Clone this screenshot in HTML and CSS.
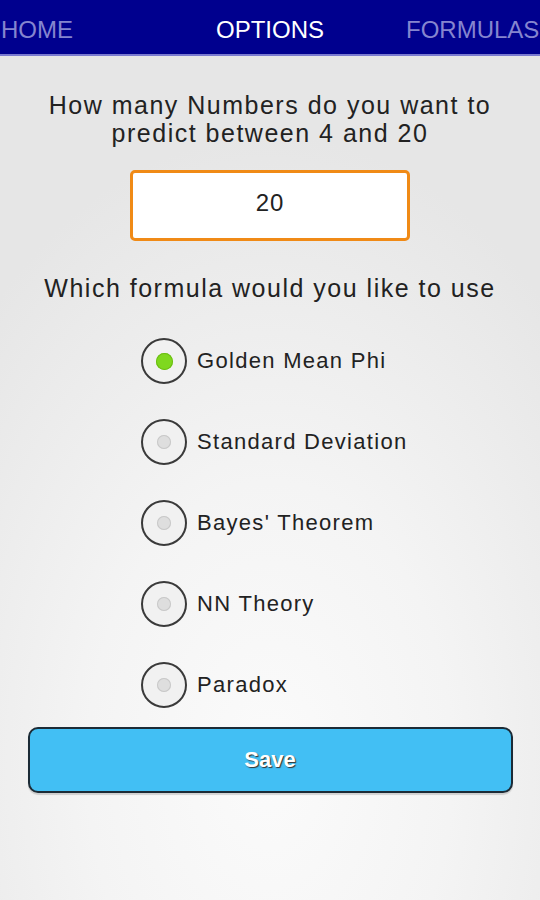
FILE: index.html
```html
<!DOCTYPE html>
<html lang="en">
<head>
  <meta charset="UTF-8" />
  <meta name="viewport" content="width=device-width, initial-scale=1.0"/>
  <title>Options</title>
  <link rel="stylesheet" href="styles.css">
</head>
<body>
  <nav class="tabs">
    <span class="tab">HOME</span>
    <span class="tab active">OPTIONS</span>
    <span class="tab">FORMULAS</span>
  </nav>

  <main class="options">
    <p class="question">How many Numbers do you want to<br>predict between 4 and 20</p>
    <input class="count" type="text" value="20">

    <p class="question formula-q">Which formula would you like to use</p>

    <ul class="formulas">
      <li class="formula checked"><span class="radio"><span class="dot"></span></span>Golden Mean Phi</li>
      <li class="formula"><span class="radio"><span class="dot"></span></span>Standard Deviation</li>
      <li class="formula"><span class="radio"><span class="dot"></span></span>Bayes' Theorem</li>
      <li class="formula"><span class="radio"><span class="dot"></span></span>NN Theory</li>
      <li class="formula"><span class="radio"><span class="dot"></span></span>Paradox</li>
    </ul>

    <button class="save">Save</button>
  </main>
</body>
</html>
```

FILE: styles.css
```css
html {
  height: 100%;
}
body {
  margin: 0;
  min-height: 100%;
  font-family: "Liberation Sans", Arial, sans-serif;
  color: #222;
  background: radial-gradient(ellipse 75% 70% at 50% 85%, #fbfbfb 0%, #f4f4f4 45%, #e6e6e6 100%);
  background-color: #e8e8e8;
  overflow: hidden;
}
.tabs {
  height: 56px;
  box-sizing: border-box;
  padding-top: 5px;
  background: #00008e;
  border-bottom: 2px solid #7a7ad0;
  display: flex;
  align-items: center;
  white-space: nowrap;
  overflow: hidden;
  font-size: 24px;
}
.tab {
  color: #8585cf;
  flex: none;
}
.tab:first-child {
  width: 215px;
  margin-left: 1px;
}
.tab.active {
  color: #fff;
  width: 190px;
}
.options {
  display: flex;
  flex-direction: column;
  align-items: center;
  padding-top: 35px;
}
.question {
  margin: 0;
  text-align: center;
  font-size: 25px;
  line-height: 28px;
  letter-spacing: 1.5px;
  white-space: nowrap;
}
.count {
  margin-top: 23px;
  width: 280px;
  height: 71px;
  box-sizing: border-box;
  border: 3px solid #f08a16;
  border-radius: 5px;
  padding: 0 0 5px;
  background: #fff;
  text-align: center;
  font-family: inherit;
  font-size: 24px;
  letter-spacing: 1px;
  color: #222;
  outline: none;
}
.formula-q {
  margin-top: 33px;
}
.formulas {
  list-style: none;
  margin: 36px 0 0;
  padding: 0;
  width: 258px;
  display: flex;
  flex-direction: column;
  gap: 35px;
}
.formula {
  display: flex;
  align-items: center;
  font-size: 22px;
  letter-spacing: 1.3px;
  white-space: nowrap;
  height: 46px;
}
.radio {
  flex: none;
  width: 46px;
  height: 46px;
  box-sizing: border-box;
  border: 2px solid #3a3a3a;
  border-radius: 50%;
  display: flex;
  align-items: center;
  justify-content: center;
  margin-right: 10px;
  background: #f1f1f1;
}
.dot {
  width: 14px;
  height: 14px;
  border-radius: 50%;
  background: #dedede;
  box-shadow: inset 0 0 0 1px #c8c8c8;
}
.checked .dot {
  width: 17px;
  height: 17px;
  background: #7fd81e;
  box-shadow: inset 0 0 0 1px #6cbd14;
}
.save {
  margin-top: 19px;
  width: 485px;
  height: 66px;
  border: 2px solid #1c2b36;
  border-radius: 10px;
  background: #42bff4;
  color: #fff;
  font-family: inherit;
  font-size: 22px;
  font-weight: bold;
  text-shadow: 1px 1px 1px #333;
  box-shadow: 0 2px 1px rgba(0,0,0,0.15);
}
```
